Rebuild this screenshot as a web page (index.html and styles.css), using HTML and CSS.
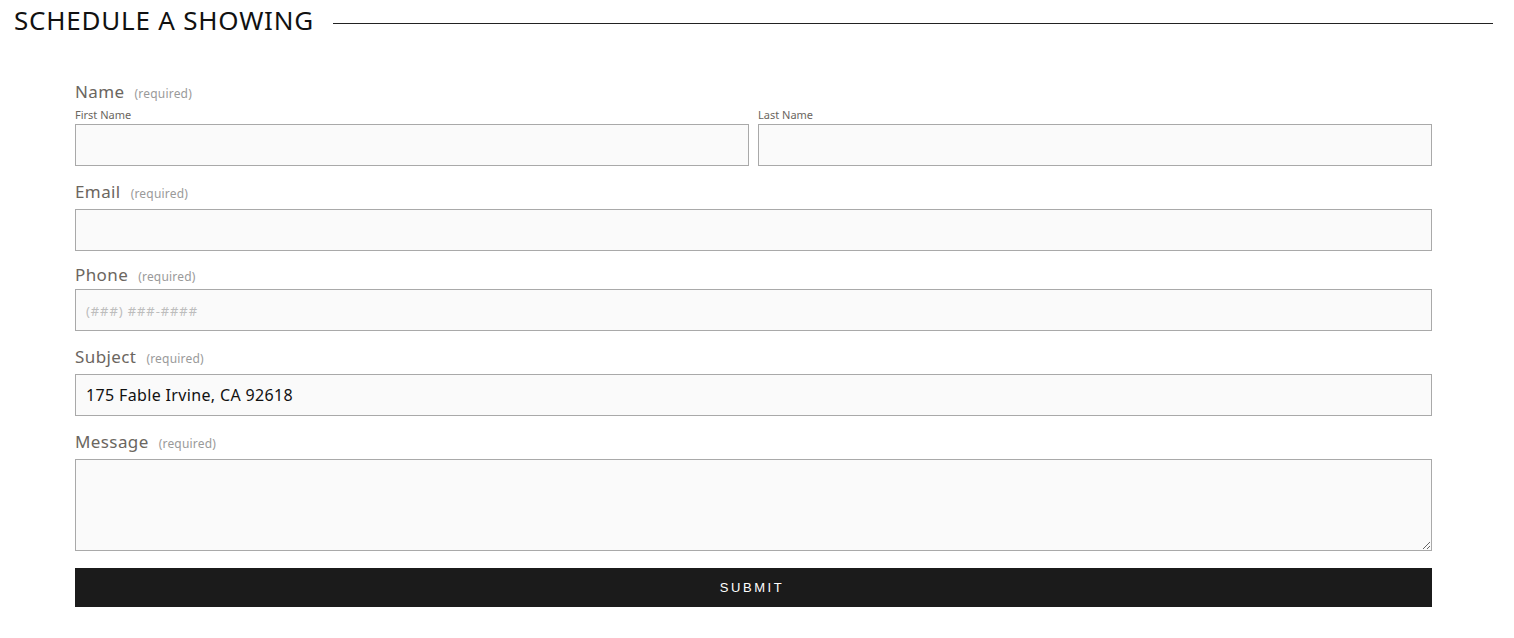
FILE: index.html
```html
<!DOCTYPE html>
<html lang="en">
<head>
<meta charset="utf-8">
<title>Schedule a Showing</title>
<link rel="stylesheet" href="styles.css">
</head>
<body>
<header class="section-head">
  <h2 class="section-title">SCHEDULE A SHOWING</h2>
  <span class="section-rule"></span>
</header>
<form class="form">
  <div class="field field--name">
    <div class="label">Name <span class="req">(required)</span></div>
    <div class="name-row">
      <div class="name-col">
        <div class="sublabel">First Name</div>
        <input class="input" type="text">
      </div>
      <div class="name-col">
        <div class="sublabel">Last Name</div>
        <input class="input" type="text">
      </div>
    </div>
  </div>
  <div class="field">
    <div class="label">Email <span class="req">(required)</span></div>
    <input class="input" type="email">
  </div>
  <div class="field field--phone">
    <div class="label">Phone <span class="req">(required)</span></div>
    <input class="input input--phone" type="tel" placeholder="(###) ###-####">
  </div>
  <div class="field">
    <div class="label">Subject <span class="req">(required)</span></div>
    <input class="input input--value" type="text" value="175 Fable Irvine, CA 92618">
  </div>
  <div class="field">
    <div class="label">Message <span class="req">(required)</span></div>
    <textarea class="input textarea"></textarea>
  </div>
  <button class="submit" type="button">SUBMIT</button>
</form>
</body>
</html>
```
FILE: styles.css
```css
* { box-sizing: border-box; }
html, body { margin: 0; padding: 0; background: #fff; }
body { font-family: "Noto Sans", "Open Sans", sans-serif; color: #222; }

.section-head {
  display: flex;
  align-items: center;
  height: 40px;
  padding: 0 21px 0 14px;
  gap: 19px;
}
.section-title {
  margin: 0;
  font-size: 26px;
  font-weight: 400;
  line-height: 40px;
  color: #111;
  white-space: nowrap;
  letter-spacing: 0.78px;
}
.section-rule {
  flex: 1;
  height: 1px;
  background: #222;
  margin-top: 6px;
}

.form {
  margin: 40px 0 0 75px;
  width: 1357px;
}
.field { margin-top: 14px; }
.field--name { margin-top: 0; }
.field--phone { margin-top: 12px; }

.label {
  display: flex;
  align-items: baseline;
  height: 24px;
  font-size: 17px;
  line-height: 24px;
  color: #6b6660;
  margin-bottom: 5px;
  white-space: nowrap;
  letter-spacing: 0.4px;
}
.field--name .label { margin-bottom: 4px; }
.field--phone .label { margin-bottom: 2px; }
.req {
  font-size: 12px;
  line-height: 24px;
  color: #9a9a9a;
  margin-left: 10px;
  letter-spacing: 0.2px;
}
.name-row {
  display: flex;
  gap: 9px;
}
.name-col { flex: 1; }
.sublabel {
  font-size: 11px;
  line-height: 14px;
  height: 14px;
  color: #6b6660;
  margin-bottom: 2px;
}
.input {
  display: block;
  width: 100%;
  height: 42px;
  border: 1px solid #a9a9a9;
  background: #fafafa;
  padding: 0 10px;
  font-family: inherit;
  font-size: 16px;
  color: #111;
  outline: none;
  border-radius: 0;
  margin: 0;
}
.input--value { letter-spacing: 0.35px; }
.input--phone::placeholder {
  color: #bdbdbd;
  font-size: 13px;
  letter-spacing: 0.9px;
}
.textarea {
  height: 92px;
  resize: vertical;
  padding: 10px;
  vertical-align: top;
}
.submit {
  display: block;
  width: 100%;
  height: 39px;
  margin-top: 17px;
  border: 0;
  background: #1b1b1b;
  color: #fff;
  font-family: "Liberation Sans", Arial, sans-serif;
  font-size: 13px;
  letter-spacing: 2.6px;
  padding-left: 3px;
  cursor: pointer;
}
```
